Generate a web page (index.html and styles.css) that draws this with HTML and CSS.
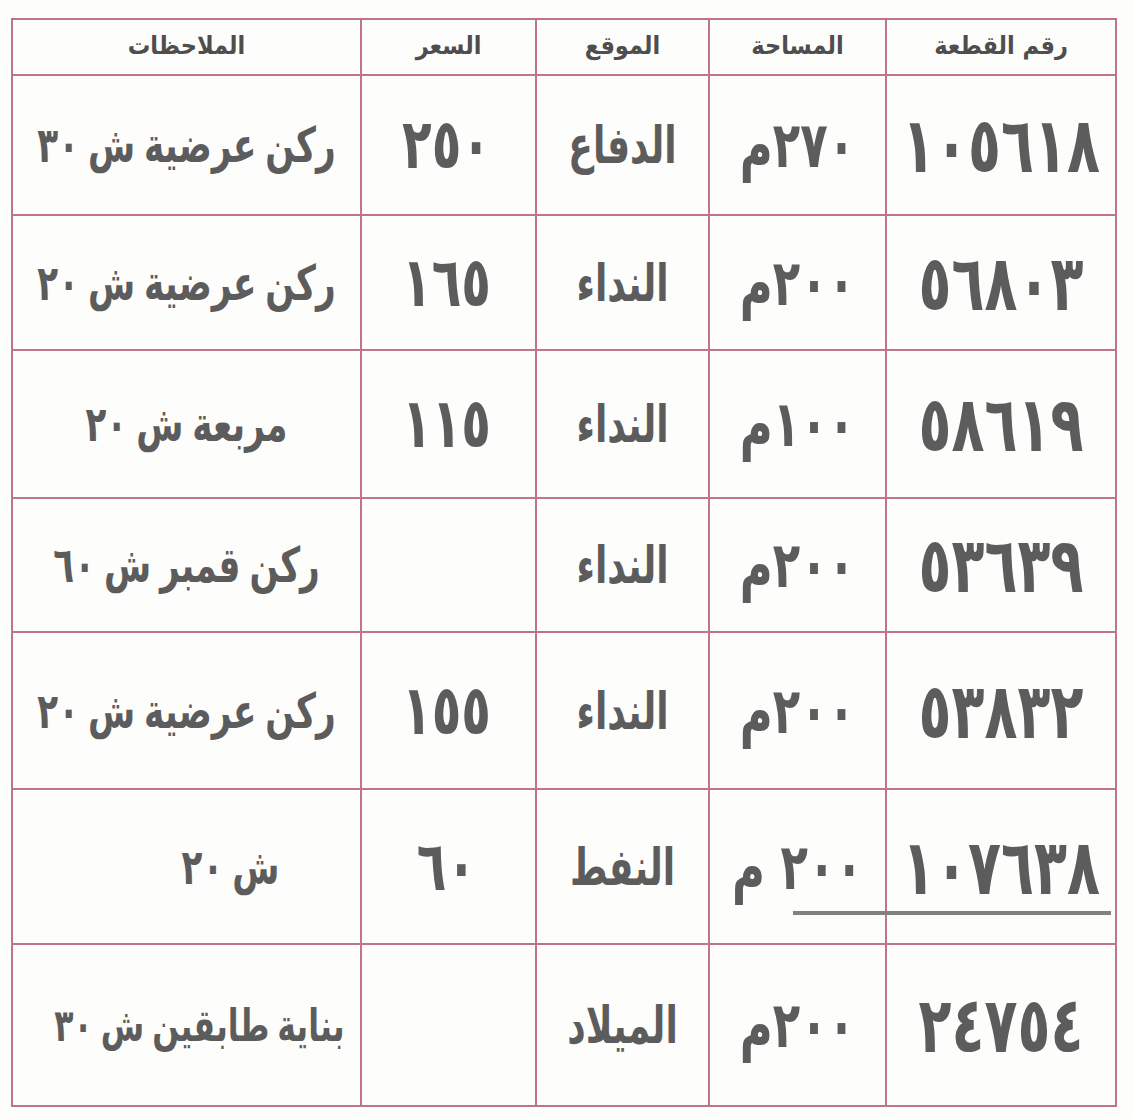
FILE: index.html
```html
<!DOCTYPE html>
<html lang="ar" dir="rtl">
<head>
<meta charset="utf-8">
<title>جدول القطع</title>
<link rel="stylesheet" href="styles.css">
</head>
<body>
<div class="sheet">
<table class="plots">
  <colgroup>
    <col class="c-num"><col class="c-area"><col class="c-loc"><col class="c-price"><col class="c-note">
  </colgroup>
  <thead>
    <tr class="head">
      <th>رقم القطعة</th><th>المساحة</th><th>الموقع</th><th>السعر</th><th>الملاحظات</th>
    </tr>
  </thead>
  <tbody>
    <tr class="r1"><td class="num"><span class="tall">١٠٥٦١٨</span></td><td class="area"><span class="tall">٢٧٠م</span></td><td class="loc"><span class="tall">الدفاع</span></td><td class="price"><span class="tall">٢٥٠</span></td><td class="note"><span class="tall">ركن عرضية ش ٣٠</span></td></tr>
    <tr class="r2"><td class="num"><span class="tall">٥٦٨٠٣</span></td><td class="area"><span class="tall">٢٠٠م</span></td><td class="loc"><span class="tall">النداء</span></td><td class="price"><span class="tall">١٦٥</span></td><td class="note"><span class="tall">ركن عرضية ش ٢٠</span></td></tr>
    <tr class="r3"><td class="num"><span class="tall">٥٨٦١٩</span></td><td class="area"><span class="tall">١٠٠م</span></td><td class="loc"><span class="tall">النداء</span></td><td class="price"><span class="tall">١١٥</span></td><td class="note"><span class="tall">مربعة ش ٢٠</span></td></tr>
    <tr class="r4"><td class="num"><span class="tall">٥٣٦٣٩</span></td><td class="area"><span class="tall">٢٠٠م</span></td><td class="loc"><span class="tall">النداء</span></td><td class="price"></td><td class="note"><span class="tall">ركن قمبر ش ٦٠</span></td></tr>
    <tr class="r5"><td class="num"><span class="tall">٥٣٨٣٢</span></td><td class="area"><span class="tall">٢٠٠م</span></td><td class="loc"><span class="tall">النداء</span></td><td class="price"><span class="tall">١٥٥</span></td><td class="note"><span class="tall">ركن عرضية ش ٢٠</span></td></tr>
    <tr class="r6"><td class="num marked"><span class="tall">١٠٧٦٣٨</span><span class="rule"></span></td><td class="area"><span class="tall">٢٠٠ م</span></td><td class="loc"><span class="tall">النفط</span></td><td class="price"><span class="tall">٦٠</span></td><td class="note note-short"><span class="tall">ش ٢٠</span></td></tr>
    <tr class="r7"><td class="num"><span class="tall">٢٤٧٥٤</span></td><td class="area"><span class="tall">٢٠٠م</span></td><td class="loc"><span class="tall">الميلاد</span></td><td class="price"></td><td class="note note-long"><span class="tall narrow">بناية طابقين ش ٣٠</span></td></tr>
  </tbody>
</table>
</div>
</body>
</html>
```

FILE: styles.css
```css
html, body {
  margin: 0;
  padding: 0;
  background: #fdfdfc;
}
body {
  font-family: "DejaVu Sans Condensed", "DejaVu Sans", sans-serif;
  color: #5a5a5a;
}
.sheet {
  padding: 18px 17px 0 13px;
}
.plots {
  width: 1104px;
  border-collapse: collapse;
  table-layout: fixed;
}
.c-num { width: 230px; }
.c-area { width: 177px; }
.c-loc { width: 173px; }
.c-price { width: 175px; }
.c-note { width: 349px; }

.plots th,
.plots td {
  border: 2px solid #c07584;
  text-align: center;
  vertical-align: middle;
  padding: 0;
  white-space: nowrap;
}
.head { height: 56px; }
.plots th {
  font-size: 25px;
  font-weight: bold;
  color: #4e4e4e;
  padding-bottom: 4px;
}
.plots td {
  font-weight: bold;
  font-size: 60px;
  color: #5c5c5c;
  line-height: 1;
}
.plots td.loc { font-size: 40px; }
.plots td.note { font-size: 38px; word-spacing: -3px; }
.plots td.note-short { padding-left: 88px; }
.plots td.note-long { padding-left: 26px; }
.plots td.area { font-size: 50px; }
.plots td.price { font-size: 54px; letter-spacing: 12px; padding-right: 4px; }
.plots td.num { letter-spacing: 3px; }

.tall {
  display: inline-block;
  transform: scaleY(1.28);
}
.tall.narrow { font-size: 35px; }

.r1 { height: 140px; }
.r2 { height: 135px; }
.r3 { height: 148px; }
.r4 { height: 134px; }
.r5 { height: 157px; }
.r6 { height: 155px; }
.r7 { height: 162px; }

.marked { position: relative; }
.rule {
  position: absolute;
  right: 4px;
  bottom: 28px;
  width: 318px;
  height: 4px;
  background: #818181;
}
```
